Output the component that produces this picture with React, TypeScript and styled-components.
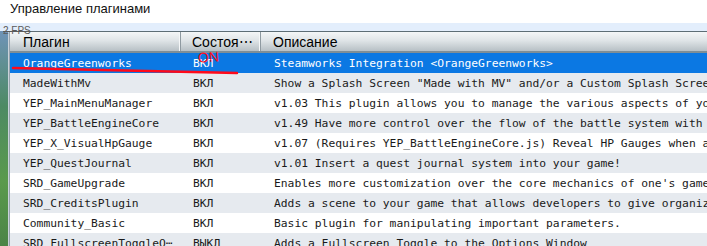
import React from 'react';
import styled, { createGlobalStyle } from 'styled-components';

const GlobalStyle = createGlobalStyle`
  html, body {
    margin: 0;
    padding: 0;
    background: #ffffff;
    overflow: hidden;
  }
  #root {
    width: 707px;
    height: 246px;
  }
`;

const Window = styled.div`
  position: relative;
  width: 707px;
  height: 246px;
  display: flex;
  flex-direction: column;
  overflow: hidden;
  background: #ffffff;
`;

const TitleBar = styled.div`
  height: 23px;
  flex: none;
  padding-left: 10px;
  font-family: 'Liberation Sans', Arial, sans-serif;
  font-size: 13px;
  line-height: 17px;
  color: #111;
  background: #ffffff;
`;

const Band = styled.div`
  height: 8px;
  flex: none;
  background: #e3eefc;
`;

const Body = styled.div`
  flex: 1;
  display: flex;
  min-height: 0;
`;

const GameStrip = styled.div`
  width: 8px;
  flex: none;
  background: linear-gradient(180deg, #6f93b8 0%, #4d8a63 35%, #5a9a4c 70%, #4b8447 100%);
  border-right: 1px solid #c9d2da;
`;

const Panel = styled.div`
  flex: 1;
  display: flex;
  flex-direction: column;
  border-left: 1px solid #98a4ae;
  min-width: 0;
`;

const Header = styled.div`
  display: grid;
  grid-template-columns: 171px 80px 1fr;
  height: 19px;
  border-top: 1px solid #5d6d75;
  border-bottom: 2px solid #7f8e96;
  background: linear-gradient(180deg, #f4f6f7 0%, #dfe4e7 45%, #b7c0c5 100%);
`;

const HeaderCell = styled.div<{ $pad: number; $divider?: boolean }>`
  padding-left: ${p => p.$pad}px;
  font-family: 'Liberation Sans', Arial, sans-serif;
  font-size: 14px;
  line-height: 20px;
  color: #000;
  white-space: nowrap;
  overflow: hidden;
  border-right: ${p => (p.$divider ? '1px solid #8f9aa1' : 'none')};
  box-shadow: ${p => (p.$divider ? 'inset -1px 0 0 #f5f7f8' : 'none')};
`;

const Row = styled.div<{ $selected?: boolean; $shade?: boolean }>`
  display: grid;
  grid-template-columns: 171px 80px 1fr;
  height: 20px;
  flex: none;
  background: ${p => (p.$selected ? '#0b78e3' : p.$shade ? '#e6eaef' : '#ffffff')};
  color: ${p => (p.$selected ? '#ffffff' : '#1a1a1a')};
`;

const Cell = styled.div<{ $pad: number }>`
  padding-left: ${p => p.$pad}px;
  padding-top: 1px;
  font-family: 'DejaVu Sans Mono', 'Liberation Mono', monospace;
  font-size: 11.3px;
  line-height: 19px;
  white-space: nowrap;
  overflow: hidden;
`;

const Fps = styled.div`
  position: absolute;
  left: 3px;
  top: 25px;
  font-family: 'Liberation Sans', Arial, sans-serif;
  font-size: 10px;
  line-height: 11px;
  color: #5a5a5a;
  text-decoration: line-through;
`;

const Scribble = styled.svg`
  position: absolute;
  left: 0;
  top: 0;
  pointer-events: none;
`;

const OnMark = styled.div`
  position: absolute;
  left: 198px;
  top: 49px;
  font-family: 'Liberation Sans', Arial, sans-serif;
  font-size: 14px;
  line-height: 16px;
  font-weight: 400;
  color: #ff1020;
  transform: rotate(-4deg);
`;

const plugins = [
  { name: 'OrangeGreenworks', status: 'ВКЛ', desc: 'Steamworks Integration <OrangeGreenworks>' },
  { name: 'MadeWithMv', status: 'ВКЛ', desc: 'Show a Splash Screen "Made with MV" and/or a Custom Splash Screen' },
  { name: 'YEP_MainMenuManager', status: 'ВКЛ', desc: 'v1.03 This plugin allows you to manage the various aspects of your main menu.' },
  { name: 'YEP_BattleEngineCore', status: 'ВКЛ', desc: 'v1.49 Have more control over the flow of the battle system with this plugin' },
  { name: 'YEP_X_VisualHpGauge', status: 'ВКЛ', desc: 'v1.07 (Requires YEP_BattleEngineCore.js) Reveal HP Gauges when attacking' },
  { name: 'YEP_QuestJournal', status: 'ВКЛ', desc: 'v1.01 Insert a quest journal system into your game!' },
  { name: 'SRD_GameUpgrade', status: 'ВКЛ', desc: "Enables more customization over the core mechanics of one's game." },
  { name: 'SRD_CreditsPlugin', status: 'ВКЛ', desc: 'Adds a scene to your game that allows developers to give organized credits' },
  { name: 'Community_Basic', status: 'ВКЛ', desc: 'Basic plugin for manipulating important parameters.' },
  { name: 'SRD_FullscreenToggleO⋯', status: 'ВЫКЛ', desc: 'Adds a Fullscreen Toggle to the Options Window' },
];

const App: React.FC = () => {
  return (
    <>
      <GlobalStyle />
      <Window>
        <TitleBar>Управление плагинами</TitleBar>
        <Band />
        <Body>
          <GameStrip />
          <Panel>
            <Header>
              <HeaderCell $pad={13} $divider>Плагин</HeaderCell>
              <HeaderCell $pad={11} $divider>Состоя⋯</HeaderCell>
              <HeaderCell $pad={12}>Описание</HeaderCell>
            </Header>
            {plugins.map((p, i) => (
              <Row key={p.name} $selected={i === 0} $shade={i % 2 === 1}>
                <Cell $pad={13}>{p.name}</Cell>
                <Cell $pad={12}>{p.status}</Cell>
                <Cell $pad={13}>{p.desc}</Cell>
              </Row>
            ))}
          </Panel>
        </Body>

        <Fps>2 FPS</Fps>
        <OnMark>ON</OnMark>
        <Scribble width="707" height="246" viewBox="0 0 707 246">
          <path d="M13 68 Q 110 70.5 237 73" stroke="#ff0a1a" strokeWidth="2.4" fill="none" strokeLinecap="round" />
        </Scribble>
      </Window>
    </>
  );
};

export default App;
